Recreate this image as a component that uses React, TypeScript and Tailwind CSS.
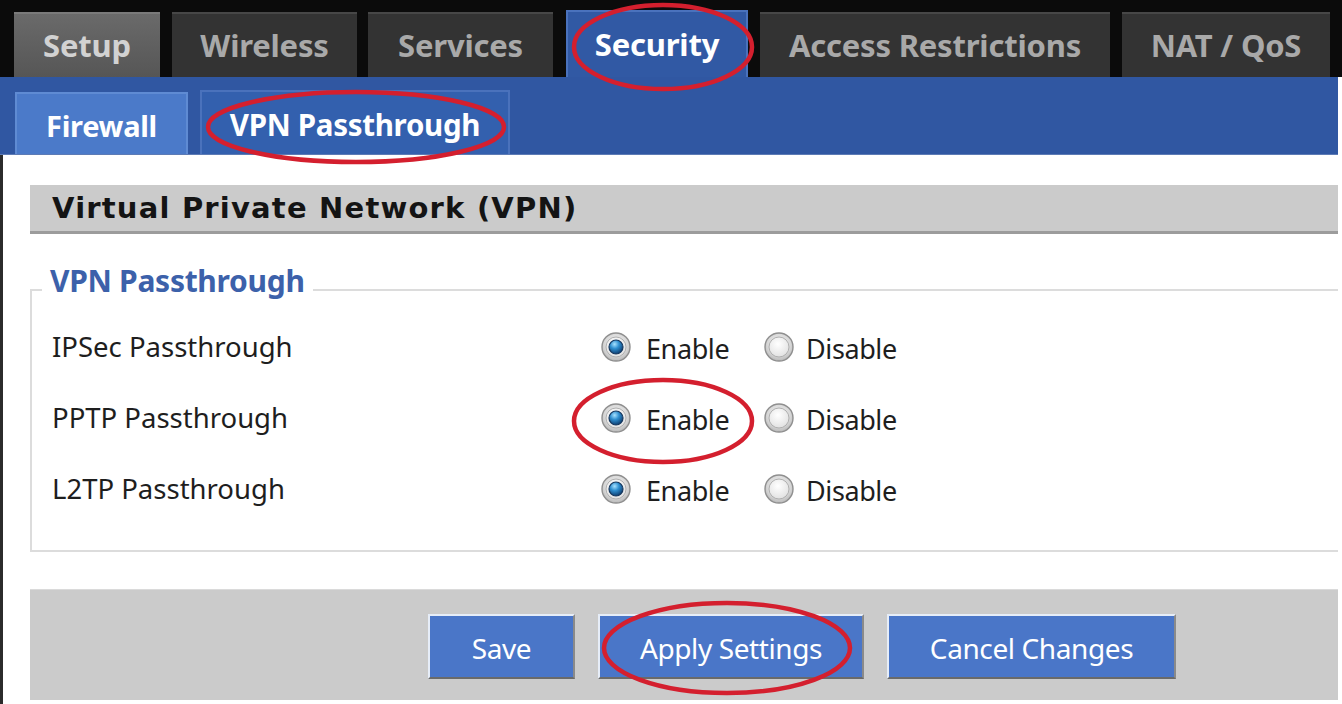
import React from "react";

const SANS = { fontFamily: '"Noto Sans", "DejaVu Sans", sans-serif' };

function Radio({ checked }: { checked: boolean }) {
  return (
    <svg width="32" height="32" viewBox="0 0 32 32" className="shrink-0">
      <defs>
        <radialGradient id="rOuter" cx="50%" cy="40%" r="60%">
          <stop offset="0%" stopColor="#f4f4f4" />
          <stop offset="70%" stopColor="#d6d6d6" />
          <stop offset="100%" stopColor="#b8b8b8" />
        </radialGradient>
        <radialGradient id="rInner" cx="45%" cy="35%" r="65%">
          <stop offset="0%" stopColor="#ffffff" />
          <stop offset="100%" stopColor="#e2e2e2" />
        </radialGradient>
        <radialGradient id="rDot" cx="40%" cy="30%" r="70%">
          <stop offset="0%" stopColor="#a8e2ff" />
          <stop offset="45%" stopColor="#2f8fd0" />
          <stop offset="100%" stopColor="#0e3f72" />
        </radialGradient>
      </defs>
      <circle cx="16" cy="16" r="14" fill="url(#rOuter)" stroke="#8f8f8f" strokeWidth="1.4" />
      <circle cx="16" cy="16" r="10" fill="url(#rInner)" stroke="#b0b0b0" strokeWidth="1" />
      {checked && (
        <circle cx="16" cy="16" r="7" fill="url(#rDot)" stroke="#17385e" strokeWidth="1.2" />
      )}
    </svg>
  );
}

function TopTab({
  label,
  w,
  kind,
}: {
  label: string;
  w: string;
  kind: "setup" | "dark" | "active";
}) {
  const cls =
    kind === "setup"
      ? "h-[65px] bg-gradient-to-b from-[#6a6a6a] to-[#565656] text-[#d2d2d2] border-t-2 border-[#7a7a7a]"
      : kind === "active"
      ? "h-[67px] bg-[#3159a4] text-white border-t-2 border-x-2 border-[#4a72bd]"
      : "h-[65px] bg-[#333333] text-[#a9a9a9] border-t-2 border-[#474747]";
  return (
    <div
      className={`${w} ${cls} flex items-center justify-center text-[31px] font-bold tracking-[-0.2px] pb-[0px]`}
    >
      {label}
    </div>
  );
}

function Row({ label }: { label: string }) {
  return (
    <div className="h-[71px] flex items-center">
      <div className="w-[548px] text-[27.5px] text-[#1e1e1e] tracking-[0px]">{label}</div>
      <div className="flex items-center">
        <Radio checked />
        <span className="ml-[14px] text-[27px] text-[#1e1e1e] tracking-[-0.4px] pt-[5px] w-[117px]">
          Enable
        </span>
        <Radio checked={false} />
        <span className="ml-[11px] text-[27px] text-[#1e1e1e] tracking-[-0.4px] pt-[5px]">
          Disable
        </span>
      </div>
    </div>
  );
}

function Btn({ label, w }: { label: string; w: string }) {
  return (
    <div
      className={`${w} h-[65px] bg-[#4a76c8] border-t-2 border-l-2 border-[#e6edf8] border-b-2 border-r-2 border-b-[#6a6a6a] border-r-[#8a8a8a] flex items-center justify-center text-white text-[28px] tracking-[-0.4px] pt-[3px]`}
    >
      {label}
    </div>
  );
}

export default function App() {
  return (
    <div className="relative w-[1342px] h-[704px] overflow-hidden bg-white" style={SANS}>
      {/* Top dark bar with tabs */}
      <div className="w-[1342px] h-[77px] bg-[#0b0b0b] flex items-end pl-[14px]">
        <TopTab label="Setup" w="w-[146px]" kind="setup" />
        <div className="w-[12px]" />
        <TopTab label="Wireless" w="w-[185px]" kind="dark" />
        <div className="w-[11px]" />
        <TopTab label="Services" w="w-[185px]" kind="dark" />
        <div className="w-[13px]" />
        <TopTab label="Security" w="w-[182px]" kind="active" />
        <div className="w-[12px]" />
        <TopTab label="Access Restrictions" w="w-[350px]" kind="dark" />
        <div className="w-[12px]" />
        <TopTab label="NAT / QoS" w="w-[208px]" kind="dark" />
      </div>

      {/* Blue sub-tab bar */}
      <div className="w-[1338px] h-[78px] bg-[#3057a2] flex items-end pl-[15px] border-b border-[#5d7bb5]">
        <div className="w-[173px] h-[62px] bg-[#4b7ac9] border-t-2 border-x-2 border-[#5f8bd3] flex items-center justify-center text-white text-[29px] font-bold tracking-[-0.3px] pt-[4px]">
          Firewall
        </div>
        <div className="w-[12px]" />
        <div className="w-[310px] h-[64px] bg-[#3360ae] border-t-2 border-x-2 border-[#4a72bc] flex items-center justify-center text-white text-[29.5px] font-bold tracking-[-0.3px] pt-[4px]">
          VPN Passthrough
        </div>
      </div>

      {/* Content */}
      <div className="w-[1338px] h-[549px] border-l-[3px] border-[#2b2b2b] pl-[27px] pt-[30px]">
        <div
          className="h-[49px] bg-[#cbcbcb] border-b-[3px] border-[#9c9c9c] flex items-center pl-[22px] text-[29px] font-bold text-[#141414] tracking-[1.2px] pt-[2px]"
          style={{ fontFamily: '"DejaVu Sans", "Noto Sans", sans-serif' }}
        >
          Virtual Private Network (VPN)
        </div>

        <div className="relative mt-[55px] h-[263px] border-2 border-r-0 border-[#dcdcdc] pl-[20px] pt-[20px]">
          <div className="absolute left-[10px] top-[-30px] bg-white px-[8px] text-[30px] font-bold text-[#3c61aa] tracking-[-0.3px] leading-[40px]">
            VPN Passthrough
          </div>
          <Row label="IPSec Passthrough" />
          <Row label="PPTP Passthrough" />
          <Row label="L2TP Passthrough" />
        </div>

        <div className="mt-[37px] h-[111px] bg-[#cbcbcb] border-t border-[#dadada] flex items-start pt-[24px] pl-[398px] gap-[23px]">
          <Btn label="Save" w="w-[147px]" />
          <Btn label="Apply Settings" w="w-[266px]" />
          <Btn label="Cancel Changes" w="w-[289px]" />
        </div>
      </div>

      {/* Red annotation ellipses */}
      <svg
        className="absolute inset-0 pointer-events-none"
        width="1342"
        height="704"
        viewBox="0 0 1342 704"
      >
        <g fill="none" stroke="#d41f2e" strokeWidth="4.5">
          <ellipse cx="663" cy="47" rx="89" ry="42" />
          <ellipse cx="356" cy="127" rx="148" ry="35" />
          <ellipse cx="663" cy="421" rx="89" ry="41" />
          <ellipse cx="727" cy="648" rx="123" ry="45" />
        </g>
      </svg>
    </div>
  );
}
